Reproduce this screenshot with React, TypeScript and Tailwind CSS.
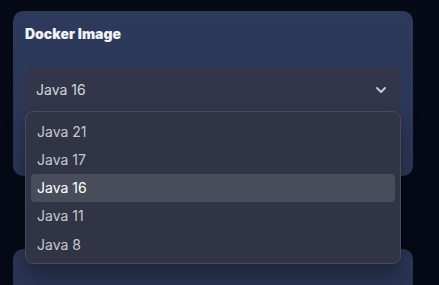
import React from 'react';
import { ChevronDown } from 'lucide-react';

const versions = ['Java 21', 'Java 17', 'Java 16', 'Java 11', 'Java 8'];

export default function App() {
  const [selected, setSelected] = React.useState('Java 16');

  return (
    <div
      className="h-[285px] w-full bg-[#050a16] px-[13px] pt-[11px] overflow-hidden"
      style={{ fontFamily: 'Inter, "Noto Sans", sans-serif' }}
    >
      {/* Docker image card */}
      <div className="relative z-10 h-[165px] w-[400px] rounded-[10px] bg-gradient-to-b from-[#2e3a5b] to-[#2b3655] px-[12px] pt-[13px]">
        <h3 className="text-[14px] leading-[20px] font-black text-[#f1f3f8]">Docker Image</h3>

        <div className="relative mt-[23px]">
          <button className="flex h-[43px] w-full items-center justify-between rounded-lg bg-[#33364a] pl-[11px] pr-[12px] pt-[2px] text-[14px] text-[#d3d6de]">
            {selected}
            <ChevronDown className="h-[16px] w-[16px] text-[#c9ccd8]" strokeWidth={2.75} />
          </button>

          {/* Open menu */}
          <div className="absolute left-0 right-0 top-full mt-[1px] rounded-lg border border-[#474a59] bg-[#313444] p-[5px] shadow-[0_10px_20px_rgba(0,0,0,0.35)]">
            {versions.map((v) => (
              <div
                key={v}
                onClick={() => setSelected(v)}
                className={
                  v === selected
                    ? 'flex h-[28.25px] items-center rounded-[4px] bg-[#494d5b] px-[6px] text-[14px] text-white'
                    : 'flex h-[28.25px] items-center rounded-[4px] px-[6px] text-[14px] text-[#c5c8d2]'
                }
              >
                {v}
              </div>
            ))}
          </div>
        </div>
      </div>

      {/* Next card */}
      <div className="mt-[73px] h-[80px] w-[400px] rounded-[10px] bg-gradient-to-b from-[#2c3757] to-[#27314e]" />
    </div>
  );
}
